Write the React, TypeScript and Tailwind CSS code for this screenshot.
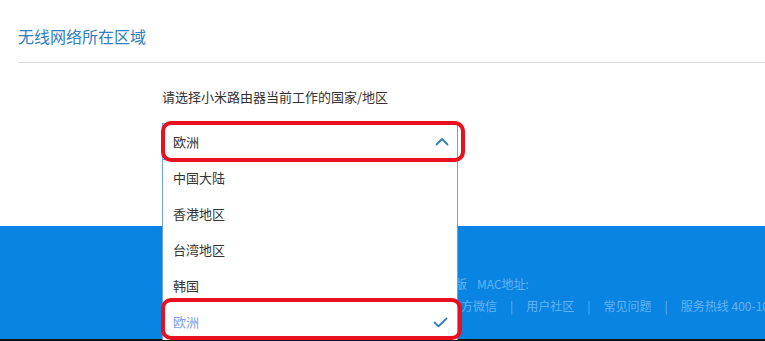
import React from "react";

const font = { fontFamily: '"Microsoft YaHei", "Noto Sans CJK SC", "Noto Sans", sans-serif' };

function ChevronUp() {
  return (
    <svg width="14" height="9" viewBox="0 0 14 9" fill="none">
      <path d="M1.5 7.5 L7 2 L12.5 7.5" stroke="#2a80c2" strokeWidth="1.8" strokeLinecap="round" strokeLinejoin="round" />
    </svg>
  );
}

function Check() {
  return (
    <svg width="15" height="11" viewBox="0 0 15 11" fill="none">
      <path d="M1.5 5.5 L5.5 9.3 L13.5 1.5" stroke="#2a7cc4" strokeWidth="1.8" strokeLinecap="round" strokeLinejoin="round" />
    </svg>
  );
}

export default function App() {
  const options = ["中国大陆", "香港地区", "台湾地区", "韩国"];
  return (
    <div className="relative w-[765px] h-[341px] overflow-hidden bg-white" style={font}>
      <div className="pt-[26px] pl-[18px] text-[16px] leading-[20px] text-[#2f7fc1]">无线网络所在区域</div>
      <div className="mt-[16px] ml-[18px] border-t border-[#dcdcdc]" />
      <div className="mt-[24px] pl-[162px] text-[13px] leading-[20px] text-[#333333]">
        请选择小米路由器当前工作的国家/地区
      </div>
      <div className="h-[119px]" />
      <div className="h-[113px] bg-[#0a84e2] pt-[50px] text-[12px] leading-[16px] text-[#62b3f2]">
        <div className="pl-[455px] flex gap-[10px]">
          <span>版</span>
          <span>MAC地址:</span>
        </div>
        <div className="mt-[6px] pl-[449px] flex whitespace-nowrap">
          <span>官方微信</span>
          <span className="mx-[13px]">|</span>
          <span>用户社区</span>
          <span className="mx-[13px]">|</span>
          <span>常见问题</span>
          <span className="mx-[13px]">|</span>
          <span>服务热线 400-100-5678</span>
        </div>
      </div>
      <div className="h-[2px] bg-[#111111]" />

      {/* dropdown overlay */}
      <div className="absolute left-[162px] top-[123px] w-[296px]">
        <div className="h-[37px] flex items-center justify-between pl-[10px] pr-[8px] bg-white border border-[#6aa8dc] text-[13px] text-[#333333]">
          <span>欧洲</span>
          <ChevronUp />
        </div>
        <div className="bg-white border-x border-[#6aa8dc]">
          {options.map((o) => (
            <div key={o} className="h-[36px] flex items-center pl-[10px] text-[13px] text-[#333333]">
              {o}
            </div>
          ))}
          <div className="h-[36px] flex items-center justify-between pl-[10px] pr-[9px] text-[13px] text-[#7d9ee6]">
            <span>欧洲</span>
            <Check />
          </div>
        </div>
      </div>

      {/* red annotation boxes */}
      <div className="absolute left-[161px] top-[121px] w-[304px] h-[41px] border-[4px] border-[#e8101e] rounded-[10px]" />
      <div className="absolute left-[161px] top-[298px] w-[301px] h-[42px] border-[4px] border-[#e8101e] rounded-[10px]" />
    </div>
  );
}
